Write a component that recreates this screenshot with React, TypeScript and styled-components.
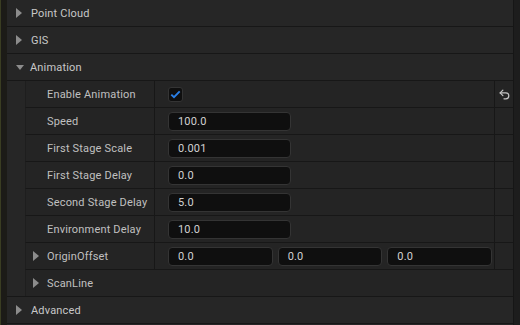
import React from "react";
import styled, { createGlobalStyle } from "styled-components";

const GlobalStyle = createGlobalStyle`
  html, body {
    margin: 0;
    padding: 0;
    background: #1b1a16;
  }
  body {
    font-family: Roboto, "Noto Sans", "Liberation Sans", sans-serif;
    font-size: 11px;
    letter-spacing: 0.18px;
    color: #c0c0c0;
  }
`;

const Frame = styled.div`
  display: flex;
  width: 520px;
  height: 325px;
  overflow: hidden;
  background: #1b1a16;
`;

const LeftStrip = styled.div`
  width: 7px;
  flex: none;
  background: #1c1b17;
  border-left: 1px solid #3a3d22;
  box-sizing: border-box;
`;

const Panel = styled.div`
  flex: 1;
  display: flex;
  flex-direction: column;
  background: #262626;
`;

const ScrollTrack = styled.div`
  width: 7px;
  flex: none;
  background: #1d1d1d;
  border-left: 1px solid #161616;
  box-sizing: border-box;
`;

const CategoryRow = styled.div`
  height: 26px;
  flex: none;
  display: flex;
  align-items: center;
  padding-left: 9px;
  gap: 9px;
  background: #262626;
  border-bottom: 1px solid #171717;
  color: #c8c8c8;
`;

const Arrow = styled.span<{ $open?: boolean }>`
  width: 0;
  height: 0;
  flex: none;
  ${(p) =>
    p.$open
      ? `border-left: 4.5px solid transparent;
         border-right: 4.5px solid transparent;
         border-top: 5.5px solid #8c8c8c;
         margin-right: -3px;`
      : `border-top: 5px solid transparent;
         border-bottom: 5px solid transparent;
         border-left: 6px solid #8c8c8c;`}
`;

const Group = styled.div`
  display: flex;
  flex-direction: column;
  padding-left: 18px;
  background: #262626;
  border-bottom: 1px solid #171717;
`;

const PropRow = styled.div<{ $last?: boolean }>`
  display: grid;
  grid-template-columns: 128px 1px 1fr 1px 18px;
  height: 26px;
  background: #242424;
  border-left: 1px solid #1e1e1e;
  border-bottom: ${(p) => (p.$last ? "none" : "1px solid #171717")};
`;

const WideRow = styled(PropRow)`
  grid-template-columns: 1fr;
`;

const NameCell = styled.div`
  display: flex;
  align-items: center;
  padding-left: 21px;
  color: #c0c0c0;
  white-space: nowrap;
`;

const SubName = styled(NameCell)`
  padding-left: 7px;
  gap: 8px;
`;

const Divider = styled.div`
  background: #171717;
`;

const ValueCell = styled.div`
  display: flex;
  align-items: center;
  gap: 5px;
  padding-left: 13px;
  padding-right: 2px;
`;

const ResetCell = styled.div`
  display: flex;
  align-items: center;
  justify-content: center;
  color: #c4c4c4;
`;

const Field = styled.div<{ $w?: number }>`
  width: ${(p) => (p.$w ? `${p.$w}px` : "auto")};
  flex: ${(p) => (p.$w ? "none" : "1")};
  height: 19px;
  box-sizing: border-box;
  display: flex;
  align-items: center;
  padding-left: 9px;
  background: #0f0f0f;
  border: 1px solid #343434;
  border-radius: 4px;
  color: #d2d2d2;
`;

const CheckBox = styled.div`
  width: 15px;
  height: 15px;
  box-sizing: border-box;
  display: flex;
  align-items: center;
  justify-content: center;
  background: #0f0f0f;
  border: 1px solid #343434;
  border-radius: 3px;
`;

const Check = () => (
  <svg width="11" height="9" viewBox="0 0 11 9">
    <path d="M1.3 4.6 4 7.2 9.7 1.4" fill="none" stroke="#2a7fe6" strokeWidth="1.9" />
  </svg>
);

const ResetIcon = () => (
  <svg width="13" height="13" viewBox="0 0 24 24" fill="none" stroke="currentColor" strokeWidth="2.3" strokeLinecap="round" strokeLinejoin="round">
    <path d="M9 14 4 9l5-5" />
    <path d="M4 9h10.5a5.5 5.5 0 0 1 5.5 5.5a5.5 5.5 0 0 1-5.5 5.5H11" />
  </svg>
);

const numberProps = [
  { name: "Speed", value: "100.0" },
  { name: "First Stage Scale", value: "0.001" },
  { name: "First Stage Delay", value: "0.0" },
  { name: "Second Stage Delay", value: "5.0" },
  { name: "Environment Delay", value: "10.0" },
];

export default function App() {
  return (
    <>
      <GlobalStyle />
      <Frame>
        <LeftStrip />
        <Panel>
          <CategoryRow>
            <Arrow />
            Point Cloud
          </CategoryRow>
          <CategoryRow>
            <Arrow />
            GIS
          </CategoryRow>
          <CategoryRow>
            <Arrow $open />
            Animation
          </CategoryRow>
          <Group>
            <PropRow>
              <NameCell>Enable Animation</NameCell>
              <Divider />
              <ValueCell>
                <CheckBox>
                  <Check />
                </CheckBox>
              </ValueCell>
              <Divider />
              <ResetCell>
                <ResetIcon />
              </ResetCell>
            </PropRow>
            {numberProps.map((p) => (
              <PropRow key={p.name}>
                <NameCell>{p.name}</NameCell>
                <Divider />
                <ValueCell>
                  <Field $w={123}>{p.value}</Field>
                </ValueCell>
                <Divider />
                <ResetCell />
              </PropRow>
            ))}
            <PropRow>
              <SubName>
                <Arrow />
                OriginOffset
              </SubName>
              <Divider />
              <ValueCell>
                <Field>0.0</Field>
                <Field>0.0</Field>
                <Field>0.0</Field>
              </ValueCell>
              <Divider />
              <ResetCell />
            </PropRow>
            <WideRow $last>
              <SubName>
                <Arrow />
                ScanLine
              </SubName>
            </WideRow>
          </Group>
          <CategoryRow>
            <Arrow />
            Advanced
          </CategoryRow>
        </Panel>
        <ScrollTrack />
      </Frame>
    </>
  );
}
